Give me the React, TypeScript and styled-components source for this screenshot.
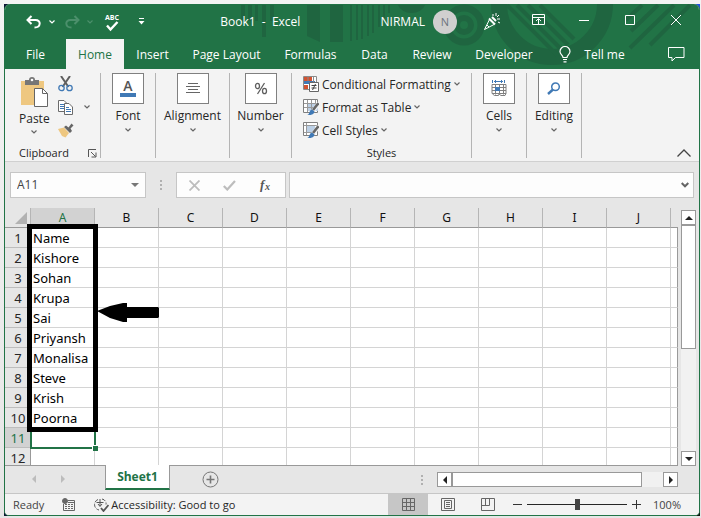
import React from "react";
import styled, { createGlobalStyle, css } from "styled-components";

const green = "#217346";
const ui = '"Open Sans", "Noto Sans", sans-serif';
const cellFont = '"Noto Sans", "Open Sans", sans-serif';

const GlobalStyle = createGlobalStyle`
  *, *::before, *::after { box-sizing: border-box; }
  body { margin: 0; background: #ededed; font-family: ${ui}; font-size: 12px; color: #262626; }
  button, input { font: inherit; color: inherit; margin: 0; padding: 0; border: 0; border-radius: 0; background: none; }
  svg { display: block; flex: none; }
`;

const Desktop = styled.div`
  height: 100vh;
  padding: 4px 1px 2px 4px;
  background:
    linear-gradient(#0b1533, #0b1533) left top / 5px 5px no-repeat content-box content-box,
    linear-gradient(#1f50e0, #1f50e0) right top / 5px 5px no-repeat content-box content-box,
    linear-gradient(#0b1533, #0b1533) left bottom / 5px 5px no-repeat content-box content-box,
    linear-gradient(#111, #111) right bottom / 5px 5px no-repeat content-box content-box,
    linear-gradient(#f3f3f3, #e6e6e6);
`;

const Window = styled.main`
  height: 100%;
  display: flex;
  flex-direction: column;
  border: 1px solid ${green};
  border-top: 0;
  border-radius: 6px 6px 5px 5px;
  overflow: hidden;
  background: #e6e6e6;
`;

const Header = styled.header`
  position: relative;
  flex: none;
  background: ${green};
  color: #fff;
`;

const Pattern = styled.svg`
  position: absolute;
  top: 0;
  right: 0;
`;

const TitleRow = styled.div`
  position: relative;
  display: flex;
  align-items: center;
  height: 35px;
`;

const QuickAccess = styled.div`
  display: flex;
  align-items: center;
  padding-left: 17px;
`;

const QuickButton = styled.button<{ $width: number }>`
  display: flex;
  align-items: center;
  justify-content: center;
  width: ${(p) => p.$width}px;
  height: 28px;
`;

const DocumentTitle = styled.h1`
  flex: 1;
  margin: 0;
  padding-right: 12px;
  text-align: center;
  font-size: 12px;
  font-weight: 400;
  line-height: 16px;
  white-space: pre;
`;

const Account = styled.button`
  display: flex;
  align-items: center;
  gap: 8px;
  margin-right: 12px;
`;

const Avatar = styled.span`
  width: 24px;
  height: 24px;
  border-radius: 50%;
  background: #d0cfcf;
  color: #6e7480;
  font-size: 11px;
  line-height: 24px;
  text-align: center;
`;

const CaptionButton = styled.button`
  display: flex;
  align-items: center;
  justify-content: center;
  width: 46px;
  height: 32px;
  align-self: flex-start;
`;

const PartyButton = styled(CaptionButton)`
  align-self: center;
`;

const TabRow = styled.nav`
  position: relative;
  display: flex;
  height: 30px;
`;

const RibbonTab = styled.button<{ $active?: boolean; $width: number }>`
  display: flex;
  align-items: center;
  justify-content: center;
  gap: 13px;
  width: ${(p) => p.$width}px;
  background: ${(p) => (p.$active ? "#f3f3f3" : "transparent")};
  color: ${(p) => (p.$active ? green : "#fff")};
  white-space: nowrap;
`;

const CommentButton = styled.button`
  margin-left: auto;
  padding-right: 14px;
  display: flex;
  align-items: center;
`;

const Ribbon = styled.section`
  flex: none;
  display: flex;
  height: 93px;
  padding: 4px 0 3px;
  background: #f3f3f3;
  border-bottom: 1px solid #d0d0d0;
`;

const Group = styled.div<{ $width: number }>`
  position: relative;
  flex: none;
  display: flex;
  flex-direction: column;
  width: ${(p) => p.$width}px;
  border-right: 1px solid #b4b4b4;
`;

const BigButton = styled.button`
  display: flex;
  flex-direction: column;
  align-items: center;
  line-height: 16px;
  gap: 4px;
`;

const PasteButton = styled(BigButton)`
  padding-top: 4px;
  gap: 3px;
`;

const IconTile = styled.span`
  display: flex;
  align-items: center;
  justify-content: center;
  width: 32px;
  height: 31px;
  border: 1px solid #808080;
  background: #fff;
`;

const GroupFooter = styled.div`
  display: flex;
  align-items: center;
  justify-content: center;
  margin-top: auto;
  height: 10px;
  font-size: 11px;
  line-height: 16px;
`;

const ClipboardFooter = styled(GroupFooter)`
  justify-content: space-between;
  padding: 0 3px 0 14px;
`;

const ClipboardBody = styled.div`
  display: flex;
  align-items: flex-start;
  gap: 8px;
  padding-left: 14px;
`;

const ClipboardTools = styled.div`
  display: flex;
  flex-direction: column;
  align-items: flex-start;
  gap: 1px;
`;

const ToolButton = styled.button`
  display: flex;
  align-items: center;
  gap: 11px;
  height: 22px;
`;

const StyleList = styled.div`
  display: flex;
  flex-direction: column;
  align-items: flex-start;
  gap: 1px;
  padding-left: 11px;
`;

const StyleButton = styled.button`
  display: flex;
  align-items: center;
  gap: 3px;
  height: 22px;
  white-space: nowrap;
`;

const CollapseButton = styled.button`
  margin: auto 8px 0 auto;
  padding-bottom: 1px;
`;

const FormulaBar = styled.section`
  flex: none;
  display: flex;
  align-items: stretch;
  height: 46px;
  padding: 10px 5px 10px 5px;
`;

const field = css`
  display: flex;
  align-items: center;
  border: 1px solid #c6c6c6;
  background: #fdfdfd;
`;

const NameBox = styled.div`
  ${field}
  width: 136px;
  padding: 0 6px;
  color: #444;
`;

const NameInput = styled.input`
  flex: 1;
  min-width: 0;
  outline: 0;
  line-height: 20px;
`;

const Grip = styled.div`
  display: flex;
  align-items: center;
  justify-content: center;
  width: 30px;
`;

const EntryButtons = styled.div`
  ${field}
  justify-content: space-around;
  width: 110px;
`;

const FormulaField = styled.div`
  ${field}
  flex: 1;
  margin-left: 3px;
  padding: 0 4px;
`;

const SheetArea = styled.section`
  flex: 1;
  min-height: 0;
  display: flex;
`;

const SheetPane = styled.div`
  position: relative;
  flex: 1;
  min-width: 0;
  overflow: hidden;
  border-bottom: 1px solid #999;
`;

const Grid = styled.table`
  width: 100%;
  table-layout: fixed;
  border-collapse: separate;
  border-spacing: 0;
  font-family: ${cellFont};
  font-size: 13px;
  line-height: 16px;
  color: #000;
`;

const ColumnHead = styled.th<{ $active?: boolean; $last?: boolean }>`
  height: 20px;
  padding: 0;
  font-size: 12px;
  font-weight: 400;
  color: ${(p) => (p.$active ? green : "#111")};
  background: ${(p) => (p.$active ? "#d2d2d2" : "#e6e6e6")};
  border-bottom: 1px solid #999;
  border-right: ${(p) => (p.$last ? "0" : "1px solid #b5b5b5")};
`;

const RowHead = styled.th<{ $active?: boolean }>`
  height: 20px;
  padding: 0 0 0 1px;
  font-weight: 400;
  text-align: center;
  color: ${(p) => (p.$active ? green : "#262626")};
  background: ${(p) => (p.$active ? "#d2d2d2" : "#e6e6e6")};
  border-right: 1px solid #999;
  border-bottom: 1px solid #bdbdbd;
`;

const Cell = styled.td<{ $last?: boolean }>`
  height: 20px;
  padding: 0 0 0 2px;
  background: #fff;
  white-space: nowrap;
  border-right: 1px solid ${(p) => (p.$last ? "#999" : "#d4d4d4")};
  border-bottom: 1px solid #d4d4d4;
`;

const Selection = styled.div`
  position: absolute;
  left: 25px;
  top: 219px;
  width: 66px;
  height: 22px;
  border: 2px solid ${green};
  &::after {
    content: "";
    position: absolute;
    right: -4px;
    bottom: -4px;
    width: 6px;
    height: 6px;
    background: ${green};
    border: 1px solid #fff;
    border-right: 0;
    border-bottom: 0;
  }
`;

const Highlight = styled.div`
  position: absolute;
  left: 22px;
  top: 16px;
  width: 71px;
  height: 208px;
  border: 5px solid #000;
`;

const Pointer = styled.svg`
  position: absolute;
  left: 92px;
  top: 94px;
`;

const VerticalBar = styled.div`
  flex: none;
  display: flex;
  flex-direction: column;
  width: 21px;
  padding: 2px 3px 0 3px;
`;

const VerticalTrack = styled.div`
  flex: 1;
  background: #f1f1f1;
`;

const VerticalThumb = styled.div`
  height: 55%;
  border: 1px solid #999;
  background: #fff;
`;

const ArrowButton = styled.button`
  flex: none;
  display: flex;
  align-items: center;
  justify-content: center;
  width: 15px;
  height: 15px;
  border: 1px solid #999;
  background: #fff;
`;

const SheetTabs = styled.section`
  flex: none;
  display: flex;
  height: 27px;
`;

const SheetNav = styled.div`
  display: flex;
  align-items: center;
  justify-content: space-between;
  width: 100px;
  padding: 0 38px 0 25px;
  margin-bottom: 2px;
`;

const SheetTab = styled.button`
  position: relative;
  width: 65px;
  height: 25px;
  margin-top: -1px;
  background: #fff;
  border: 1px solid #999;
  border-top: 0;
  border-bottom: 2px solid ${green};
  color: ${green};
  font-weight: 700;
`;

const AddSheet = styled.button`
  margin-left: 32px;
  padding-bottom: 1px;
`;

const HorizontalBar = styled.div`
  display: flex;
  align-items: center;
  width: 39%;
  min-width: 120px;
  margin: 0 21px 0 auto;
`;

const HorizontalTrack = styled.div`
  flex: 1;
  height: 15px;
  background: #f1f1f1;
`;

const HorizontalThumb = styled.div`
  width: 90%;
  height: 15px;
  border: 1px solid #999;
  background: #fff;
`;

const StatusBar = styled.footer`
  flex: none;
  display: flex;
  align-items: center;
  height: 22px;
  padding: 0 18px 0 8px;
  border-top: 1px solid #c6c6c6;
  background: #f3f3f3;
  font-size: 11px;
  line-height: 16px;
  color: #444;
`;

const StatusButton = styled.button`
  display: flex;
  align-items: center;
  gap: 2px;
  margin-left: 18px;
  font-weight: 500;
  color: #262626;
`;

const ViewButton = styled.button<{ $active?: boolean }>`
  display: flex;
  align-items: center;
  justify-content: center;
  width: 40px;
  height: 100%;
  background: ${(p) => (p.$active ? "#c6c6c6" : "transparent")};
`;

const Views = styled.div`
  display: flex;
  align-self: stretch;
  margin-left: auto;
`;

const Zoom = styled.div`
  display: flex;
  align-items: center;
  gap: 5px;
  margin: 0 12px 0 5px;
`;

const ZoomSlider = styled.input`
  appearance: none;
  width: 100px;
  height: 12px;
  background: linear-gradient(#262626, #262626) center / 100% 1px no-repeat;
  &::-webkit-slider-thumb {
    appearance: none;
    width: 5px;
    height: 11px;
    background: #444;
  }
`;

const Chevron = ({ color = "#666" }: { color?: string }) => (
  <svg width="6" height="4" viewBox="0 0 6 4" fill="none" stroke={color} strokeWidth="1.2">
    <path d="M.5.5 3 3 5.5.5" />
  </svg>
);

const HeaderPattern = () => (
  <Pattern width="464" height="65" viewBox="235 4 464 65" fill="#1f6540" aria-hidden="true">
    <path d="M241 5h4v16h-4zM248 5h4v16h-4zM255 5h3v16h-3zM262 5h4v32h-4zM270 5h4v16h-4z" />
    <path d="M307 5h13v37l-13-6zM330 5h13v37h-13zM350 5h2v36h-2zM356 5h2v35h-2zM361 5h2v34h-2zM367 5h2v31h-2zM372 5h2v28h-2zM378 5h2v22h-2zM383 5h2v17h-2zM388 5h2v8h-2z" />
    <path d="M398 5h27a14 11 0 0 1-27 0z" />
    <g fill="none" stroke="#1f6540">
      <circle cx="464" cy="25" r="17" strokeWidth="7" />
      <circle cx="464" cy="25" r="7" strokeWidth="6" />
      <circle cx="552" cy="4" r="53" strokeWidth="16" />
      <path d="M507 5l50 50M517 5l46 46M528 5l40 40M540 5l34 34" strokeWidth="4" />
      <path d="M674 5l-44 43M658 5l-27 26M642 5l-16 15M690 5l-40 40" strokeWidth="4" />
    </g>
  </Pattern>
);

const Undo = ({ color, flip }: { color: string; flip?: boolean }) => (
  <svg width="16" height="14" viewBox="0 0 16 14" fill="none" stroke={color} strokeWidth="2">
    <path
      d={
        flip
          ? "M10.500 1l4 4-4 4M14.500 5H6.500C.5 5 1 12.500 7.500 12.500"
          : "M5.500 1l-4 4 4 4M1.500 5H9.500c6 0 5.500 7.500-1 7.500"
      }
    />
  </svg>
);

const SpellCheck = () => (
  <svg width="16" height="20" viewBox="0 -2 16 20">
    <text x="8" y="6" textAnchor="middle" fontFamily="Open Sans, sans-serif" fontSize="7" fontWeight="700" fill="#fff">
      ABC
    </text>
    <path d="M3 11.500l3.500 4L13.500 8" fill="none" stroke="#fff" strokeWidth="2.400" />
  </svg>
);

const Customize = () => (
  <svg width="7" height="7" viewBox="0 0 7 7" fill="#fff">
    <path d="M1 0h5v1H1zM.5 3h6L3.500 6.500z" />
  </svg>
);

const Party = () => (
  <svg width="18" height="18" viewBox="0 0 18 18" fill="none" stroke="#fff">
    <path d="M6.500 6.500L1.500 16.500 11 11.500" />
    <path d="M6 5.500l6 6M9 4l4 4" strokeWidth="2" />
    <path d="M10 1v2M13 0v3M16 2l-2 2M14 6h3M15 9l2 1" />
    <path d="M4 12l2 2" />
  </svg>
);

const RibbonDisplay = () => (
  <svg width="13" height="12" viewBox="0 0 13 12" fill="none" stroke="#fff">
    <path d="M.5.5h12v10H.5zM.5 3.500h12M6.500 10V5M4 7l2.500-2.500L9 7" />
  </svg>
);

const Bulb = () => (
  <svg width="12" height="17" viewBox="0 0 12 17" fill="none" stroke="#fff" strokeWidth="1.200">
    <path d="M4 11.500C4 9 1 8.500 1 5.500a5 5 0 0 1 10 0c0 3-3 3.500-3 6zM4 13.500h4M4.500 15.800h3" />
  </svg>
);

const CommentIcon = () => (
  <svg width="17" height="16" viewBox="0 0 17 16" fill="none" stroke="#fff">
    <path d="M.5 1.500h15.500v10H7.500L4 15v-3.500H.5z" />
  </svg>
);

const PasteIcon = () => (
  <svg width="29" height="31" viewBox="0 0 29 31">
    <path d="M1 4h23v24H1z" fill="#eec780" />
    <path d="M5 3h4a3 3 0 0 1 6 0h4v5H5z" fill="#767676" />
    <circle cx="12" cy="3" r="1.300" fill="#fff" />
    <path d="M14.500 11.500h8l5 5v13h-13z" fill="#fff" stroke="#666" />
    <path d="M22.500 11.500v5h5" fill="none" stroke="#666" />
  </svg>
);

const CutIcon = () => (
  <svg width="15" height="16" viewBox="0 0 15 16" fill="none">
    <path d="M3 0l7.500 11M12 0L4.500 11" stroke="#5f5f5f" strokeWidth="2" />
    <circle cx="3.500" cy="12" r="2.700" stroke="#4079b5" strokeWidth="1.300" />
    <circle cx="11.500" cy="12" r="2.700" stroke="#4079b5" strokeWidth="1.300" />
  </svg>
);

const CopyIcon = () => (
  <svg width="15" height="15" viewBox="0 0 15 15" fill="#fff" stroke="#6b6b6b">
    <path d="M.5.5H6L8.500 3v8.500h-8z" />
    <path d="M2 4.500h4M2 6.500h4M2 8.500h4" stroke="#4079b5" />
    <path d="M6.500 3.500H11L14.500 7v7.500h-8z" />
    <path d="M8 7.500h3M8 9.500h5M8 11.500h5" stroke="#4079b5" />
  </svg>
);

const PainterIcon = () => (
  <svg width="16" height="15" viewBox="0 0 16 15">
    <path d="M0 6l6-1.500 5 5.500-3.500 4.500L4 13z" fill="#eec780" />
    <path d="M6 4l2-1.500 2.500 2L13.500.5l2 2-3 3L14 8l-2 2z" fill="#666" />
  </svg>
);

const Launcher = () => (
  <svg width="9" height="9" viewBox="0 0 9 9" fill="none" stroke="#555">
    <path d="M.5 8V.5H8M3 3l4.500 4.500M8 3.500v4.500H3.500" />
  </svg>
);

const FontIcon = () => (
  <svg width="18" height="28" viewBox="0 -4 18 28">
    <text x="9" y="12" textAnchor="middle" fontFamily="Open Sans, sans-serif" fontSize="14" fontWeight="600" fill="#555">
      A
    </text>
    <path d="M1 14h16v4H1z" fill="#4079b5" />
  </svg>
);

const AlignIcon = () => (
  <svg width="14" height="11" viewBox="0 0 14 11" stroke="#666">
    <path d="M2 .5h10M0 3.500h14M2 6.500h10M0 9.500h14" />
  </svg>
);

const PercentIcon = () => (
  <svg width="14" height="13" viewBox="0 0 14 13" fill="none" stroke="#5f5f5f" strokeWidth="1.300">
    <ellipse cx="3.500" cy="4" rx="2" ry="2.700" />
    <ellipse cx="10.500" cy="9" rx="2" ry="2.700" />
    <path d="M10.500 1l-7 11" />
  </svg>
);

const ConditionalIcon = () => (
  <svg width="16" height="16" viewBox="0 0 16 16" fill="none">
    <path d="M.5.5h13v13H.5z" fill="#fff" stroke="#8a8a8a" />
    <path d="M1 1h8v4H1z M1 9h4v4H1z" fill="#d35230" />
    <path d="M1 5h11v3H1z" fill="#4079b5" />
    <path d="M10.500 1v5M5 1v4" stroke="#8a8a8a" />
    <path d="M6.500 6.500h9v9h-9z" fill="#fff" stroke="#666" />
    <path d="M8.500 9.500h5M8.500 12h5M12.500 8l-3 6" stroke="#444" />
  </svg>
);

const TableStyleIcon = ({ cell }: { cell?: boolean }) => (
  <svg width="16" height="16" viewBox="0 0 16 16" fill="none">
    <path d="M.5.5h14v13H.5z" fill="#fff" stroke="#808080" />
    <path d={cell ? "M3 4h9v6H3z" : "M5 4h10v8H5z"} fill="#bcd0e6" />
    <path d={cell ? "M3.500 1v12M1 3.500h14M1 10.500h8" : "M4.500 1v12M8.500 1v12M12.500 1v7M1 4.500h14M1 8.500h11"} stroke="#999" />
    <path d="M16 4L10 12" stroke="#f3f3f3" strokeWidth="4" />
    <path d="M15.500 4L10 11" stroke="#666" strokeWidth="2.600" />
    <path d="M4 16c3 0 1.500-4.500 5-5.500l2.500 2C11 15.500 8 16.500 4 16z" fill="#4079b5" />
  </svg>
);

const CellsIcon = () => (
  <svg width="16" height="17" viewBox="0 0 16 17" fill="none">
    <path d="M1.500 0v3M13.500 0v3M3 1.500h9M5 0L3.500 1.500 5 3M10 0l1.500 1.500L10 3" stroke="#4079b5" />
    <path d="M1 4.500h14v9H1zM4.500 4.500v10M8.500 4.500v10M12.500 4.500v10M1 7.500h14M1 10.500h14" stroke="#808080" />
    <path d="M1.500 14l2 1.500h4L8 14l2 1.500h4l1-2" stroke="#808080" />
    <path d="M4 7h5v4H4z" fill="#4079b5" />
  </svg>
);

const FindIcon = () => (
  <svg width="14" height="13" viewBox="0 0 14 13" fill="none" stroke="#4079b5">
    <circle cx="8.500" cy="4.800" r="3.800" strokeWidth="1.500" />
    <path d="M6 7.500L1 12" strokeWidth="2.400" />
  </svg>
);

const Dots = () => (
  <svg width="2" height="10" viewBox="0 0 2 10" fill="#b0b0b0">
    <path d="M0 0h2v2H0zM0 4h2v2H0zM0 8h2v2H0z" />
  </svg>
);

const Triangle = ({ dir, color = "#222" }: { dir: "up" | "down" | "left" | "right"; color?: string }) => {
  const paths = { up: "M0 6h8L4 2z", down: "M0 2h8L4 6z", left: "M6 0v8L2 4z", right: "M2 0v8l4-4z" };
  return (
    <svg width="8" height="8" viewBox="0 0 8 8" fill={color}>
      <path d={paths[dir]} />
    </svg>
  );
};

const columns = ["A", "B", "C", "D", "E", "F", "G", "H", "I", "J"];
const names = ["Name", "Kishore", "Sohan", "Krupa", "Sai", "Priyansh", "Monalisa", "Steve", "Krish", "Poorna", "", ""];
const tabs = [
  { label: "File", width: 61 },
  { label: "Home", width: 58, active: true },
  { label: "Insert", width: 57 },
  { label: "Page Layout", width: 91 },
  { label: "Formulas", width: 77 },
  { label: "Data", width: 51 },
  { label: "Review", width: 64 },
  { label: "Developer", width: 80 },
];

const TileGroup = ({ label, width, children }: { label: string; width: number; children: React.ReactNode }) => (
  <Group $width={width}>
    <BigButton>
      <IconTile>{children}</IconTile>
      {label}
      <Chevron />
    </BigButton>
  </Group>
);

export default function App() {
  return (
    <Desktop>
      <GlobalStyle />
      <Window>
        <Header>
          <HeaderPattern />
          <TitleRow>
            <QuickAccess>
              <QuickButton $width={24} aria-label="Undo"><Undo color="#fff" /></QuickButton>
              <QuickButton $width={12} aria-label="Undo history"><Chevron color="#fff" /></QuickButton>
              <QuickButton $width={28} aria-label="Redo"><Undo color="#4b8f6b" flip /></QuickButton>
              <QuickButton $width={8} aria-label="Redo history"><Chevron color="#4b8f6b" /></QuickButton>
              <QuickButton $width={36} aria-label="Spelling"><SpellCheck /></QuickButton>
              <QuickButton $width={22} aria-label="Customize toolbar"><Customize /></QuickButton>
            </QuickAccess>
            <DocumentTitle>{"Book1  -  Excel"}</DocumentTitle>
            <Account>
              NIRMAL
              <Avatar>N</Avatar>
            </Account>
            <PartyButton aria-label="Coming soon"><Party /></PartyButton>
            <CaptionButton aria-label="Ribbon display options"><RibbonDisplay /></CaptionButton>
            <CaptionButton aria-label="Minimize">
              <svg width="10" height="11" stroke="#fff"><path d="M0 5.500h10" /></svg>
            </CaptionButton>
            <CaptionButton aria-label="Maximize">
              <svg width="10" height="10" stroke="#fff" fill="none"><path d="M.5.5h9v9h-9z" /></svg>
            </CaptionButton>
            <CaptionButton aria-label="Close">
              <svg width="10" height="10" stroke="#fff"><path d="M0 0l10 10M10 0L0 10" /></svg>
            </CaptionButton>
          </TitleRow>
          <TabRow>
            {tabs.map((t) => (
              <RibbonTab key={t.label} $active={t.active} $width={t.width}>{t.label}</RibbonTab>
            ))}
            <RibbonTab $width={96}><Bulb />Tell me</RibbonTab>
            <CommentButton aria-label="Comments"><CommentIcon /></CommentButton>
          </TabRow>
        </Header>

        <Ribbon>
          <Group $width={96}>
            <ClipboardBody>
              <PasteButton>
                <PasteIcon />
                Paste
                <Chevron />
              </PasteButton>
              <ClipboardTools>
                <ToolButton aria-label="Cut"><CutIcon /></ToolButton>
                <ToolButton aria-label="Copy"><CopyIcon /><Chevron /></ToolButton>
                <ToolButton aria-label="Format Painter"><PainterIcon /></ToolButton>
              </ClipboardTools>
            </ClipboardBody>
            <ClipboardFooter>
              Clipboard
              <button aria-label="Clipboard settings"><Launcher /></button>
            </ClipboardFooter>
          </Group>
          <TileGroup label="Font" width={55}><FontIcon /></TileGroup>
          <TileGroup label="Alignment" width={74}><AlignIcon /></TileGroup>
          <TileGroup label="Number" width={62}><PercentIcon /></TileGroup>
          <Group $width={180}>
            <StyleList>
              <StyleButton><ConditionalIcon /><span>Conditional Formatting</span><Chevron /></StyleButton>
              <StyleButton><TableStyleIcon /><span>Format as Table</span><Chevron /></StyleButton>
              <StyleButton><TableStyleIcon cell /><span>Cell Styles</span><Chevron /></StyleButton>
            </StyleList>
            <GroupFooter>Styles</GroupFooter>
          </Group>
          <TileGroup label="Cells" width={55}><CellsIcon /></TileGroup>
          <TileGroup label="Editing" width={55}><FindIcon /></TileGroup>
          <CollapseButton aria-label="Collapse the ribbon">
            <svg width="14" height="8" viewBox="0 0 14 8" fill="none" stroke="#444" strokeWidth="1.300">
              <path d="M.5 7.500L7 1l6.500 6.500" />
            </svg>
          </CollapseButton>
        </Ribbon>

        <FormulaBar>
          <NameBox>
            <NameInput aria-label="Name box" defaultValue="A11" />
            <button aria-label="Named ranges"><Triangle dir="down" color="#777" /></button>
          </NameBox>
          <Grip><Dots /></Grip>
          <EntryButtons>
            <button aria-label="Cancel">
              <svg width="11" height="11" stroke="#bdbdbd" strokeWidth="1.800"><path d="M.5.5l10 10M10.500.5l-10 10" /></svg>
            </button>
            <button aria-label="Enter">
              <svg width="13" height="11" stroke="#bdbdbd" strokeWidth="2.200" fill="none"><path d="M.8 6l3.500 3.500L12 1" /></svg>
            </button>
            <button aria-label="Insert function">
              <svg width="14" height="16" viewBox="0 -1 14 16" fill="#555" fontFamily="Liberation Serif, serif" fontStyle="italic" fontWeight="700">
                <text x="1" y="11" fontSize="13">f</text>
                <text x="6" y="12" fontSize="10">x</text>
              </svg>
            </button>
          </EntryButtons>
          <FormulaField>
            <NameInput aria-label="Formula" />
            <button aria-label="Expand formula bar">
              <svg width="8" height="6" stroke="#666" strokeWidth="2" fill="none"><path d="M.7 1L4 4.300 7.300 1" /></svg>
            </button>
          </FormulaField>
        </FormulaBar>

        <SheetArea>
          <SheetPane>
            <Grid>
              <colgroup>
                <col width="26" />
                {columns.map((c) => <col key={c} width="64" />)}
                <col />
              </colgroup>
              <thead>
                <tr>
                  <ColumnHead aria-label="Select all">
                    <svg width="25" height="19" fill="#b2b2b2"><path d="M22 4v12H10z" /></svg>
                  </ColumnHead>
                  {columns.map((c, i) => <ColumnHead key={c} scope="col" $active={i === 0}>{c}</ColumnHead>)}
                  <ColumnHead $last />
                </tr>
              </thead>
              <tbody>
                {names.map((name, r) => (
                  <tr key={r}>
                    <RowHead scope="row" $active={r === 10}>{r + 1}</RowHead>
                    {columns.map((c, i) => <Cell key={c}>{i === 0 ? name : ""}</Cell>)}
                    <Cell $last />
                  </tr>
                ))}
              </tbody>
            </Grid>
            <Selection />
            <Highlight />
            <Pointer width="62" height="20" viewBox="0 0 62 20">
              <path d="M0 9l13-5 13-3h4v4h31l1 1v9l-1 1H30v4h-4l-13-4z" fill="#000" />
            </Pointer>
          </SheetPane>
          <VerticalBar>
            <ArrowButton aria-label="Scroll up"><Triangle dir="up" /></ArrowButton>
            <VerticalTrack><VerticalThumb /></VerticalTrack>
            <ArrowButton aria-label="Scroll down"><Triangle dir="down" /></ArrowButton>
          </VerticalBar>
        </SheetArea>

        <SheetTabs>
          <SheetNav>
            <button aria-label="Previous sheet"><Triangle dir="left" color="#bcbcbc" /></button>
            <button aria-label="Next sheet"><Triangle dir="right" color="#bcbcbc" /></button>
          </SheetNav>
          <SheetTab>Sheet1</SheetTab>
          <AddSheet aria-label="New sheet">
            <svg width="17" height="17" viewBox="0 0 17 17" fill="none" stroke="#767676">
              <circle cx="8.500" cy="8.500" r="7.500" />
              <path d="M4.500 8.500h8M8.500 4.500v8" strokeWidth="1.600" />
            </svg>
          </AddSheet>
          <HorizontalBar>
            <Grip><Dots /></Grip>
            <ArrowButton aria-label="Scroll left"><Triangle dir="left" /></ArrowButton>
            <HorizontalTrack><HorizontalThumb /></HorizontalTrack>
            <ArrowButton aria-label="Scroll right"><Triangle dir="right" /></ArrowButton>
          </HorizontalBar>
        </SheetTabs>

        <StatusBar>
          Ready
          <StatusButton aria-label="Record macro">
            <svg width="13" height="13" viewBox="0 0 13 13" fill="none" stroke="#666">
              <path d="M1.500 6v6.500h11v-10H6M3 6.500h2M6 6.500h2M9 6.500h2M3 8.500h2M6 8.500h2M9 8.500h2M3 10.500h2M6 10.500h2M9 10.500h2M6 4.500h6" />
              <circle cx="3" cy="3" r="2.500" fill="#666" />
            </svg>
          </StatusButton>
          <StatusButton>
            <svg width="16" height="14" viewBox="0 0 16 14" fill="none" stroke="#555">
              <path d="M5 1.500A5.500 5.500 0 0 0 6 12M9 1c3 .5 4.500 3 4 5.500" strokeDasharray="4 1.500" />
              <path d="M3.500 4.500h7M7 1v7M5 6l2 2.500L9 6" />
              <path d="M8 10l2.500 3 5-6" strokeWidth="1.800" />
            </svg>
            Accessibility: Good to go
          </StatusButton>
          <Views>
            <ViewButton $active aria-label="Normal view">
              <svg width="13" height="13" fill="none" stroke="#666"><path d="M.5.5h12v12H.5zM4.500 0v13M8.500 0v13M0 4.500h13M0 8.500h13" /></svg>
            </ViewButton>
            <ViewButton aria-label="Page layout view">
              <svg width="14" height="13" fill="none" stroke="#666"><path d="M.5.5h13v12H.5zM3.500 2.500h7v8h-7zM5 4.500h4M5 6.500h4M5 8.500h4" /></svg>
            </ViewButton>
            <ViewButton aria-label="Page break preview">
              <svg width="14" height="13" fill="none" stroke="#666"><path d="M.5.5h13v12H.5zM.5 7.500h8v-7M4.500 .5v7" /></svg>
            </ViewButton>
          </Views>
          <Zoom>
            <button aria-label="Zoom out"><svg width="9" height="9" stroke="#333"><path d="M0 4.500h9" /></svg></button>
            <ZoomSlider type="range" aria-label="Zoom" min="0" max="100" defaultValue="50" />
            <button aria-label="Zoom in"><svg width="9" height="9" stroke="#333"><path d="M0 4.500h9M4.500 0v9" /></svg></button>
          </Zoom>
          100%
        </StatusBar>
      </Window>
    </Desktop>
  );
}
